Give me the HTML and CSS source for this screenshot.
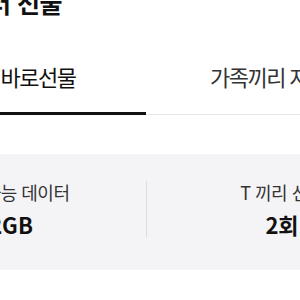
FILE: index.html
```html
<!DOCTYPE html>
<html lang="ko">
<head>
  <meta charset="UTF-8">
  <title>데이터 선물</title>
  <link rel="stylesheet" href="styles.css">
</head>
<body>

  <h1 class="title">데이터 선물</h1>

  <nav class="tabs">
    <a href="#" class="tab tab-active">바로선물</a>
    <a href="#" class="tab tab-left">가족끼리 자동선물</a>
  </nav>

  <section class="summary">
    <div class="summary-item">
      <p class="summary-label">선물가능 데이터</p>
      <p class="summary-value">2GB</p>
    </div>
    <div class="summary-item summary-item-split">
      <p class="summary-label">T 끼리 선물</p>
      <p class="summary-value">2회</p>
    </div>
  </section>

</body>
</html>
```

FILE: styles.css
```css
body {
  margin: 0;
  overflow: hidden;
  font-family: "Noto Sans CJK KR", "Noto Sans", sans-serif;
  color: #222;
  background: #fff;
}
.title {
  margin: -13px 0 0 -57px;
  font-size: 25px;
  line-height: 30px;
  font-weight: 700;
  letter-spacing: -0.5px;
  color: #111;
  white-space: nowrap;
}
.tabs {
  display: flex;
  margin-left: -70px;
  width: 600px;
  border-bottom: 1px solid #e8e8e8;
}
.tab {
  display: block;
  width: 216px;
  padding: 46px 0 23px;
  font-size: 22px;
  line-height: 26px;
  letter-spacing: -1.5px;
  color: #333;
  text-align: center;
  text-decoration: none;
  white-space: nowrap;
  border-bottom: 3px solid transparent;
  margin-bottom: -1px;
}
.tab-active {
  color: #111;
  border-bottom-color: #111;
}
.tab-left {
  width: auto;
  padding-left: 64px;
  text-align: left;
}
.summary {
  display: flex;
  margin: 39px 0 0 -124px;
  width: 560px;
  padding: 27px 0 33px;
  background: #f4f4f6;
}
.summary-item {
  width: 270px;
  text-align: center;
}
.summary-item-split {
  border-left: 1px solid #dcdcdf;
}
.summary-label {
  margin: 0;
  font-size: 18px;
  line-height: 22px;
  letter-spacing: -0.5px;
  color: #333;
}
.summary-value {
  margin: 8px 0 0;
  font-size: 22px;
  line-height: 26px;
  font-weight: 700;
  color: #111;
}
```
